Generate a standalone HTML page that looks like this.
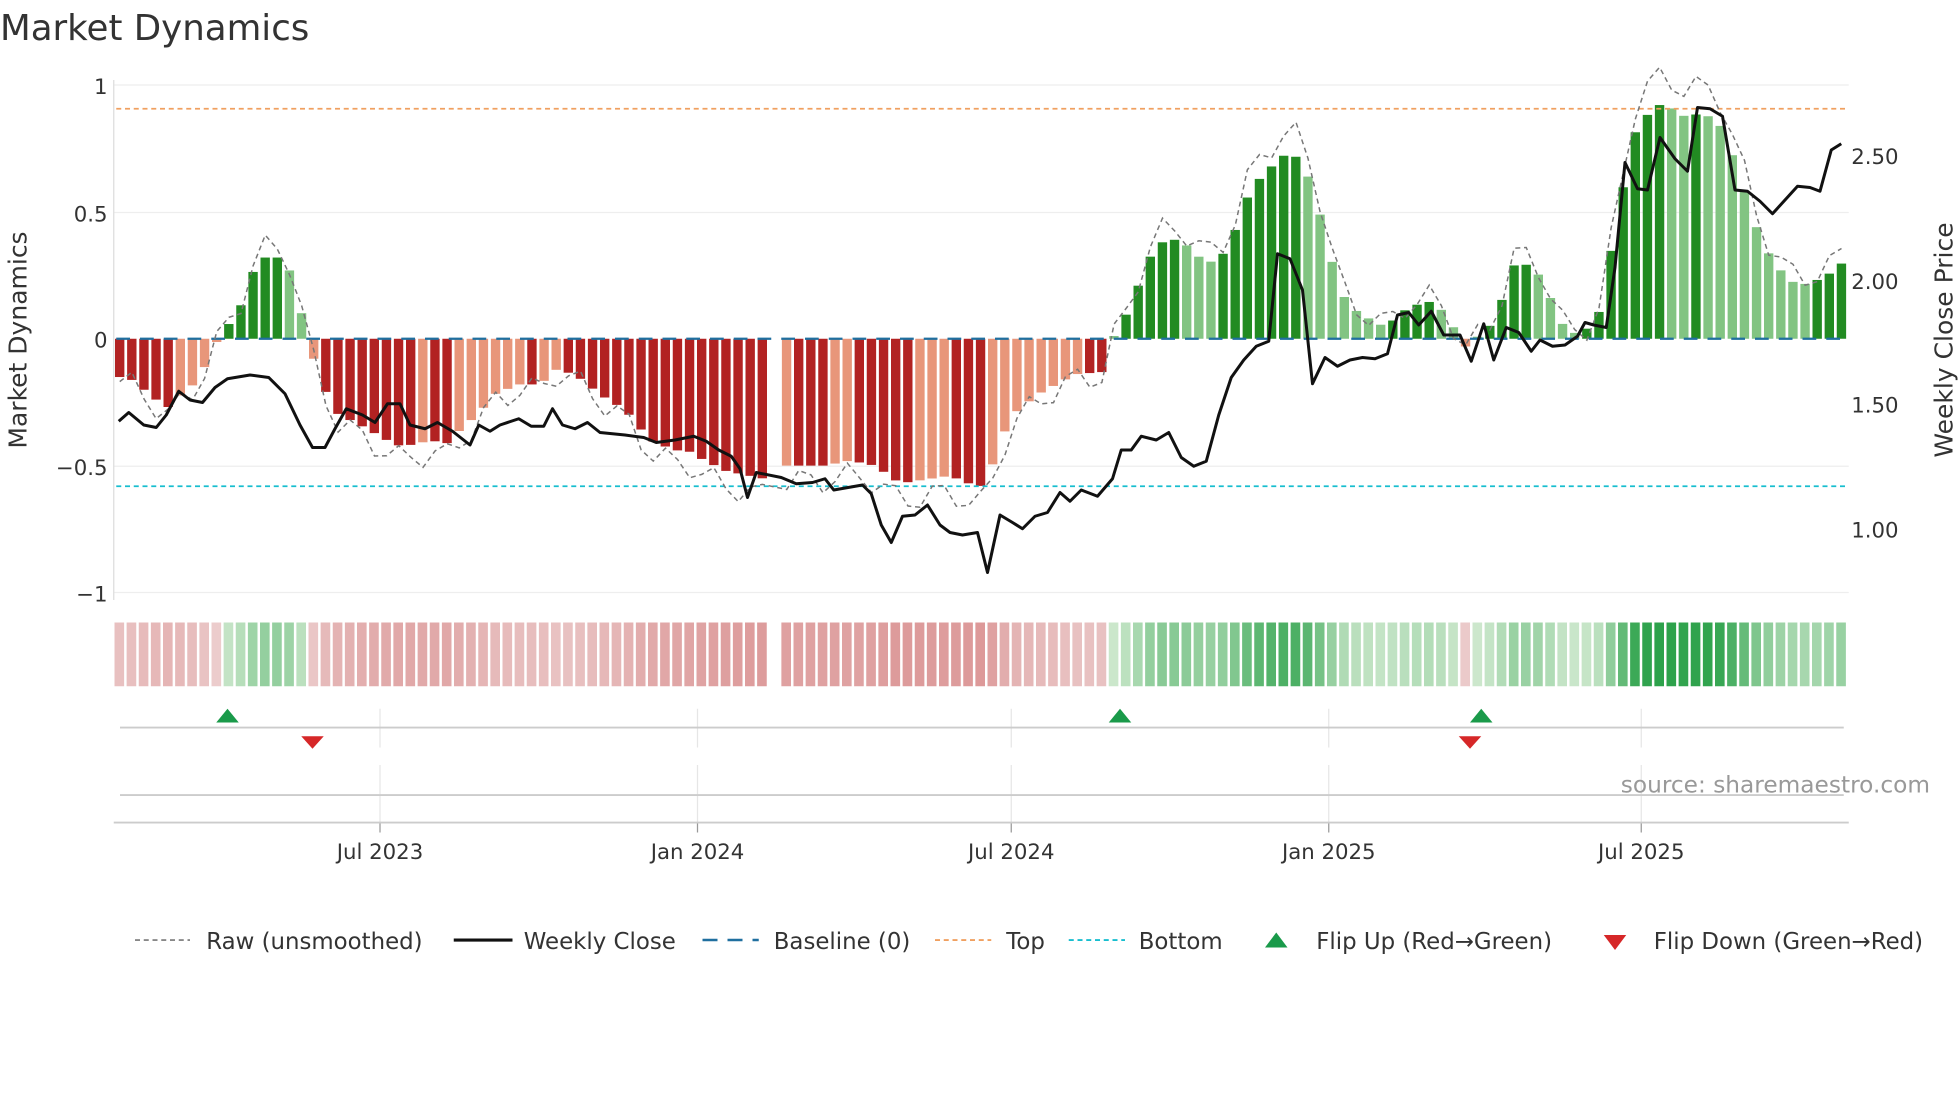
<!DOCTYPE html>
<html><head><meta charset="utf-8">
<style>
html,body{margin:0;padding:0;background:#fff;width:1960px;height:1102px;overflow:hidden}
svg{display:block}
text{font-family:"DejaVu Sans","Liberation Sans",sans-serif}
</style></head><body>
<svg id="s" width="1960" height="1102" viewBox="0 0 1568 881.6" xmlns="http://www.w3.org/2000/svg">
<text x="0" y="32" font-size="28.5" fill="#333">Market Dynamics</text>
<g id="grid"></g>
<g id="bars"></g>
<g id="heat"></g>
<g id="lines"></g>
<g font-size="17" fill="#333">
<text x="86" y="75" text-anchor="end">1</text>
<text x="86" y="177" text-anchor="end">0.5</text>
<text x="86" y="278" text-anchor="end">0</text>
<text x="86" y="380" text-anchor="end">−0.5</text>
<text x="86" y="481" text-anchor="end">−1</text>
<text x="1481" y="131">2.50</text>
<text x="1481" y="231">2.00</text>
<text x="1481" y="330">1.50</text>
<text x="1481" y="430">1.00</text>
<text transform="translate(21,272) rotate(-90)" text-anchor="middle" font-size="20">Market Dynamics</text>
<text transform="translate(1562,272) rotate(-90)" text-anchor="middle" font-size="20">Weekly Close Price</text>
<text x="304" y="687" text-anchor="middle">Jul 2023</text>
<text x="558" y="687" text-anchor="middle">Jan 2024</text>
<text x="809" y="687" text-anchor="middle">Jul 2024</text>
<text x="1063" y="687" text-anchor="middle">Jan 2025</text>
<text x="1313" y="687" text-anchor="middle">Jul 2025</text>
<text x="1544" y="634" text-anchor="end" fill="#999" font-size="18.6">source: sharemaestro.com</text>
</g>
<g font-size="18.3" fill="#333">
<line x1="108" y1="752" x2="152" y2="752" stroke="#777" stroke-width="1.3" stroke-dasharray="4,3"/>
<text x="165" y="759">Raw (unsmoothed)</text>
<line x1="363" y1="752" x2="410" y2="752" stroke="#111" stroke-width="2.5"/>
<text x="419" y="759">Weekly Close</text>
<line x1="562" y1="752" x2="607" y2="752" stroke="#1f6f9f" stroke-width="2" stroke-dasharray="12,8"/>
<text x="619" y="759">Baseline (0)</text>
<line x1="748" y1="752" x2="793" y2="752" stroke="#f0a060" stroke-width="1.5" stroke-dasharray="4,3"/>
<text x="805" y="759">Top</text>
<line x1="855" y1="752" x2="900" y2="752" stroke="#17becf" stroke-width="1.5" stroke-dasharray="4,3"/>
<text x="911" y="759">Bottom</text>
<polygon points="1012,758 1021,746 1030,758" fill="#1a9a4a"/>
<text x="1053" y="759">Flip Up (Red→Green)</text>
<polygon points="1283,748 1292,760 1301,748" fill="#d62728"/>
<text x="1323" y="759">Flip Down (Green→Red)</text>
</g>
</svg>
<script>
var NS="http://www.w3.org/2000/svg";
function el(p,t,a){var e=document.createElementNS(NS,t);for(var k in a)e.setAttribute(k,a[k]);p.appendChild(e);return e;}
function Y(v){return 271-v*203;}
var grid=document.getElementById('grid'),bars=document.getElementById('bars'),heat=document.getElementById('heat'),lines=document.getElementById('lines');
[68,170,373,474].forEach(function(y){el(grid,'line',{x1:91,x2:1479,y1:y,y2:y,stroke:'#eee','stroke-width':1});});
[304,558,809,1063,1313].forEach(function(x){el(grid,'line',{x1:x,x2:x,y1:567,y2:598,stroke:'#e6e6e6'});el(grid,'line',{x1:x,x2:x,y1:612,y2:658,stroke:'#e6e6e6'});el(grid,'line',{x1:x,x2:x,y1:658,y2:666,stroke:'#999'});});
el(grid,'line',{x1:91,x2:91,y1:64,y2:480,stroke:'#ddd'});
el(grid,'line',{x1:96,x2:1475,y1:582,y2:582,stroke:'#ccc','stroke-width':1.5});
el(grid,'line',{x1:96,x2:1475,y1:636,y2:636,stroke:'#ccc','stroke-width':1.5});
el(grid,'line',{x1:91,x2:1479,y1:658,y2:658,stroke:'#ccc','stroke-width':1.5});
var K=[[95,-.15],[105,-.16],[115,-.2],[125,-.24],[135,-.27],[145,-.22],[155,-.18],[163,-.12],[172,-.02],[178,0.01],[182,.05],[192,.12],[202,.26],[212,.32],[222,.32],[231,.28],[240,.13],[246,0],[249,-.05],[259,-.19],[268,-.29],[288,-.34],[317,-.42],[327,-.42],[346,-.4],[356,-.42],[366,-.37],[384,-.29],[395,-.22],[415,-.18],[433,-.18],[443,-.12],[460,-.14],[480,-.22],[500,-.28],[520,-.4],[540,-.44],[550,-.44],[560,-.47],[580,-.52],[610,-.55],[627,-.5],[660,-.5],[680,-.48],[700,-.5],[720,-.57],[760,-.54],[780,-.58],[790,-.58],[797,-.44],[810,-.3],[830,-.22],[860,-.14],[885,-.13],[890,0],[905,.13],[915,.27],[925,.37],[935,.39],[945,.39],[955,.34],[965,.3],[975,.31],[985,.38],[995,.53],[1005,.62],[1013,.65],[1022,.71],[1031,.73],[1040,.71],[1050,.6],[1060,.42],[1070,.22],[1080,.12],[1090,.1],[1100,.06],[1110,.05],[1120,.1],[1130,.13],[1148,.15],[1158,.08],[1165,.03],[1175,-.05],[1185,.03],[1195,.06],[1205,.2],[1215,.34],[1225,.26],[1233,.25],[1243,.13],[1253,.03],[1263,.02],[1273,.05],[1282,.13],[1291,.41],[1300,.63],[1310,.85],[1320,.89],[1330,.93],[1340,.9],[1350,.87],[1360,.89],[1370,.87],[1380,.82],[1388,.69],[1398,.55],[1408,.4],[1418,.31],[1428,.25],[1438,.21],[1448,.22],[1458,.24],[1468,.27],[1476,.31]];
function interp(A,x){if(x<=A[0][0])return A[0][1];for(var i=1;i<A.length;i++){if(x<=A[i][0]){var t=(x-A[i-1][0])/(A[i][0]-A[i-1][0]);return A[i-1][1]+t*(A[i][1]-A[i-1][1]);}}return A[A.length-1][1];}
var w=9.7,n=143,prev=null,raw=[];
for(var i=0;i<n;i++){
 var x0=91+i*w,cx=x0+w/2,v=interp(K,cx);
 if(cx>611&&cx<621)continue;
 var dark = prev===null?true:(Math.abs(v)>=Math.abs(prev)-0.005);
 prev=v;
 var col=v<0?(dark?'#b22222':'#e8967a'):(dark?'#228b22':'#82c482');
 if(Math.abs(v)>0.003) el(bars,'rect',{x:x0+1,width:w-2.2,y:Math.min(Y(v),271),height:Math.abs(Y(v)-271),fill:col});
 var a=Math.min(1,Math.abs(v)/0.9);
 var c;
 if(v<0){c='rgb('+Math.round(236-24*a)+','+Math.round(205-80*a)+','+Math.round(205-80*a)+')';}
 else{c='rgb('+Math.round(205-160*a)+','+Math.round(232-70*a)+','+Math.round(205-130*a)+')';}
 el(heat,'rect',{x:x0+0.6,width:w-2,y:498,height:51,fill:c});
 raw.push([cx,Y(v*1.12+Math.sin(i*1.7)*0.05)]);
}
el(lines,'line',{x1:93,x2:1477,y1:271,y2:271,stroke:'#1f6f9f','stroke-width':1.8,'stroke-dasharray':'11,8'});
el(lines,'line',{x1:93,x2:1477,y1:87,y2:87,stroke:'#f0a060','stroke-width':1.4,'stroke-dasharray':'4,3'});
el(lines,'line',{x1:93,x2:1477,y1:389,y2:389,stroke:'#17becf','stroke-width':1.4,'stroke-dasharray':'4,3'});
el(lines,'polyline',{points:raw.map(function(p){return p[0].toFixed(1)+','+p[1].toFixed(1);}).join(' '),fill:'none',stroke:'#777','stroke-width':1.2,'stroke-dasharray':'4,3'});
var P=[[95,337],[103,330],[115,340],[125,342],[133,332],[143,313],[152,320],[162,322],[172,310],[182,303],[200,300],[215,302],[228,315],[240,340],[250,358],[260,358],[268,343],[277,327],[290,332],[300,338],[310,323],[320,323],[328,340],[340,343],[350,338],[362,345],[376,356],[383,340],[392,345],[400,340],[415,335],[425,341],[435,341],[442,327],[450,340],[460,343],[470,338],[480,346],[500,348],[515,350],[525,354],[540,352],[555,349],[565,353],[575,360],[585,365],[592,375],[598,398],[605,378],[625,382],[637,387],[650,386],[660,383],[667,392],[690,388],[697,395],[705,420],[713,434],[722,413],[732,412],[742,404],[752,420],[760,426],[770,428],[782,426],[790,458],[800,412],[810,418],[818,423],[828,413],[838,410],[848,394],[856,401],[865,392],[878,397],[890,383],[897,360],[905,360],[913,349],[925,352],[935,346],[945,366],[955,373],[965,369],[975,332],[985,302],[995,288],[1005,277],[1015,273],[1022,203],[1032,207],[1042,232],[1050,307],[1060,286],[1070,293],[1080,288],[1090,286],[1100,287],[1110,283],[1118,252],[1127,250],[1135,260],[1145,249],[1155,268],[1168,268],[1177,289],[1187,259],[1195,288],[1205,262],[1215,266],[1225,281],[1232,272],[1242,277],[1252,276],[1262,269],[1268,258],[1275,260],[1285,262],[1292,214],[1300,130],[1310,151],[1318,152],[1328,110],[1340,127],[1350,137],[1358,86],[1368,87],[1378,93],[1388,152],[1398,153],[1408,161],[1418,171],[1428,160],[1438,149],[1448,150],[1456,153],[1465,120],[1473,115]];
el(lines,'polyline',{points:P.map(function(p){return p.join(',');}).join(' '),fill:'none',stroke:'#111','stroke-width':2.4,'stroke-linejoin':'round'});
[182,896,1185].forEach(function(x){el(lines,'polygon',{points:(x-9)+',578 '+x+',567 '+(x+9)+',578',fill:'#1a9a4a'});});
[250,1176].forEach(function(x){el(lines,'polygon',{points:(x-9)+',589 '+x+',599 '+(x+9)+',589',fill:'#d62728'});});
</script>
</body></html>
